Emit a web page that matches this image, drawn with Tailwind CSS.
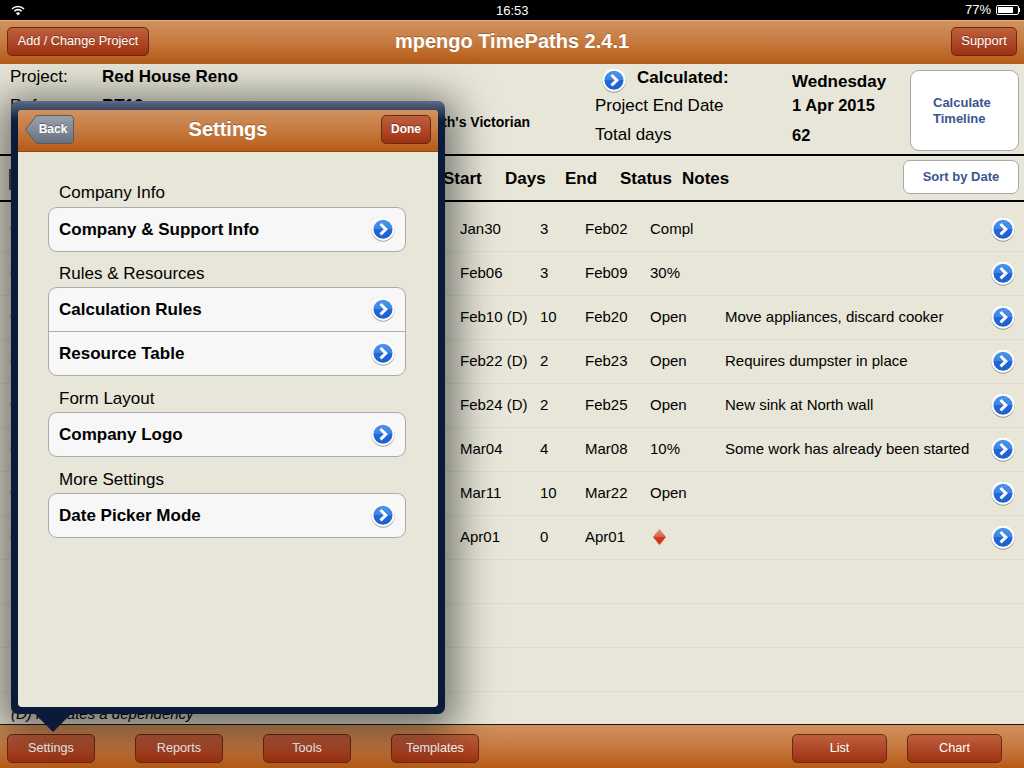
<!DOCTYPE html>
<html lang="en">
<head>
    <meta charset="UTF-8">
    <meta name="viewport" content="width=device-width, initial-scale=1.0">
    <title>mpengo TimePaths</title>
    <script src="https://cdn.jsdelivr.net/npm/@tailwindcss/browser@4"></script>
</head>
<body class="font-['Liberation_Sans',sans-serif] text-black bg-[#e7e6d8]">
<svg class="absolute w-0 h-0">
    <defs>
        <linearGradient id="blue" x1="0" y1="0" x2="0" y2="1">
            <stop offset="0" stop-color="#4f94ea"/>
            <stop offset="0.5" stop-color="#3d83e4"/>
            <stop offset="0.5" stop-color="#2468d8"/>
            <stop offset="1" stop-color="#1a5fd0"/>
        </linearGradient>
        <linearGradient id="ruby" x1="0" y1="0" x2="0" y2="1">
            <stop offset="0" stop-color="#e58a78"/>
            <stop offset="0.5" stop-color="#d9604c"/>
            <stop offset="0.5" stop-color="#d8391f"/>
            <stop offset="1" stop-color="#c93219"/>
        </linearGradient>
        <symbol id="disclosure" viewBox="0 0.8 24 24">
            <circle cx="12" cy="13" r="11.5" fill="#000" fill-opacity="0.35"/>
            <circle cx="12" cy="12" r="11.5" fill="#fff"/>
            <circle cx="12" cy="12" r="9.5" fill="url(#blue)"/>
            <path d="M9.5 6.8 L14.8 12 L9.5 17.2" fill="none" stroke="#fff" stroke-width="3"/>
        </symbol>
    </defs>
</svg>

<div class="relative w-[1024px] h-[768px] overflow-hidden flex flex-col">
    <!-- Status bar -->
    <div class="h-5 bg-black text-white text-[13px] flex items-center justify-between relative shrink-0">
        <svg class="ml-[11px]" width="14" height="11" viewBox="0 0 14 11">
            <path d="M1 4 A8.5 8.5 0 0 1 13 4" fill="none" stroke="#fff" stroke-width="1.6"/>
            <path d="M3.3 6.2 A5.2 5.2 0 0 1 10.7 6.2" fill="none" stroke="#fff" stroke-width="1.6"/>
            <path d="M7 10.5 L4.9 8.2 A3 3 0 0 1 9.1 8.2 Z" fill="#fff"/>
        </svg>
        <span class="absolute left-[496px] top-[3px] leading-4">16:53</span>
        <div class="flex items-center mr-[4px]">
            <span>77%</span>
            <div class="ml-[5px] w-[23px] h-[10px] border border-white rounded-[2px] p-[1px]"><div class="h-full w-[77%] bg-white"></div></div>
            <div class="w-[1px] h-1 bg-white"></div>
        </div>
    </div>

    <!-- Top nav bar -->
    <div class="h-11 shrink-0 bg-linear-to-b from-[#d0925f] via-[#c67a3f] to-[#b75b16] border-t border-[#e0ac80] border-b border-b-[#a8642f] flex items-center justify-between px-[7px] pb-[2px] relative">
        <button class="h-[29px] w-[142px] pt-[1px] rounded-[5px] border border-[#6b2a10] bg-linear-to-b from-[#bf5f3e] to-[#9d310e] text-white text-[12.7px] [text-shadow:0_-1px_0_#0005]">Add / Change Project</button>
        <div class="absolute inset-x-0 text-center text-white text-[20px] font-bold leading-6 [text-shadow:0_-1px_0_#0004] pointer-events-none">mpengo TimePaths 2.4.1</div>
        <button class="h-[29px] w-[66px] rounded-[5px] border border-[#6b2a10] bg-linear-to-b from-[#bf5f3e] to-[#9d310e] text-white text-[13px] [text-shadow:0_-1px_0_#0005]">Support</button>
    </div>

    <!-- Project summary -->
    <div class="h-[90px] shrink-0 relative flex border-b-[2px] border-black box-content">
        <div class="w-[589px] pl-[10px] pt-[3px] text-[17px] leading-5">
            <div class="flex h-[29px]"><span class="w-[92px]">Project:</span><span class="font-bold">Red House Reno</span></div>
            <div class="flex h-[29px]"><span class="w-[92px]">Ref:</span><span class="font-bold">RT10</span></div>
            <div class="flex h-5"><span class="w-[92px]">Site:</span><span class="font-bold text-[14px] w-[428px] text-right -mt-[13px]">Smith's Victorian</span></div>
        </div>
        <div class="w-[197px] pt-[2px] text-[17px] leading-5 pl-[6px]">
            <div class="flex h-[29px] items-start">
                <svg class="w-6 h-6 ml-[7px] mt-[3px] shrink-0"><use href="#disclosure"/></svg>
                <span class="font-bold ml-[11px] mt-[2px]">Calculated:</span>
            </div>
            <div class="h-[29px] pt-[1px]">Project End Date</div>
            <div class="pt-[1px]">Total days</div>
        </div>
        <div class="w-[124px] pt-[8px] pl-[6px] leading-5 font-bold">
            <div class="h-[23px] text-[17px]">Wednesday</div>
            <div class="h-[30px] text-[16.5px]">1 Apr 2015</div>
            <div class="text-[16.5px]">62</div>
        </div>
        <button class="mt-[6px] w-[109px] h-[81px] bg-white border border-[#a9a9a9] rounded-[9px] text-left pl-[22px] text-[13px] leading-4 font-bold text-[#3b5590]">Calculate<br>Timeline</button>
    </div>

    <!-- Column headers -->
    <div class="h-[42px] shrink-0 relative flex items-center pt-[2px] border-b-[2px] border-black box-content font-bold text-[17px]">
        <span class="w-[9px]"></span>
        <span class="w-[434px] h-[21px] border-l-2 border-[#555]"></span>
        <span class="w-[62px]">Start</span>
        <span class="w-[60px]">Days</span>
        <span class="w-[55px]">End</span>
        <span class="w-[62px]">Status</span>
        <span class="w-[221px]">Notes</span>
        <button class="w-[116px] h-[34px] mb-[4px] bg-white border border-[#a9a9a9] rounded-[7px] text-[13px] text-[#3b5590] font-bold">Sort by Date</button>
    </div>

    <!-- Rows -->
    <div class="flex-1 text-[15px] pt-[6px] relative">
        <div class="h-11 flex items-center border-b border-[#dcdccf] pl-[10px]"><span class="w-[450px]">C</span><span class="w-20">Jan30</span><span class="w-[45px]">3</span><span class="w-[65px]">Feb02</span><span class="w-[75px]">Compl</span><span class="w-[266px]"></span><svg class="w-6 h-6"><use href="#disclosure"/></svg></div>
        <div class="h-11 flex items-center border-b border-[#dcdccf] pl-[10px]"><span class="w-[450px]">C</span><span class="w-20">Feb06</span><span class="w-[45px]">3</span><span class="w-[65px]">Feb09</span><span class="w-[75px]">30%</span><span class="w-[266px]"></span><svg class="w-6 h-6"><use href="#disclosure"/></svg></div>
        <div class="h-11 flex items-center border-b border-[#dcdccf] pl-[10px]"><span class="w-[450px]">C</span><span class="w-20">Feb10 (D)</span><span class="w-[45px]">10</span><span class="w-[65px]">Feb20</span><span class="w-[75px]">Open</span><span class="w-[266px]">Move appliances, discard cooker</span><svg class="w-6 h-6"><use href="#disclosure"/></svg></div>
        <div class="h-11 flex items-center border-b border-[#dcdccf] pl-[10px]"><span class="w-[450px]">C</span><span class="w-20">Feb22 (D)</span><span class="w-[45px]">2</span><span class="w-[65px]">Feb23</span><span class="w-[75px]">Open</span><span class="w-[266px]">Requires dumpster in place</span><svg class="w-6 h-6"><use href="#disclosure"/></svg></div>
        <div class="h-11 flex items-center border-b border-[#dcdccf] pl-[10px]"><span class="w-[450px]">C</span><span class="w-20">Feb24 (D)</span><span class="w-[45px]">2</span><span class="w-[65px]">Feb25</span><span class="w-[75px]">Open</span><span class="w-[266px]">New sink at North wall</span><svg class="w-6 h-6"><use href="#disclosure"/></svg></div>
        <div class="h-11 flex items-center border-b border-[#dcdccf] pl-[10px]"><span class="w-[450px]">C</span><span class="w-20">Mar04</span><span class="w-[45px]">4</span><span class="w-[65px]">Mar08</span><span class="w-[75px]">10%</span><span class="w-[266px]">Some work has already been started</span><svg class="w-6 h-6"><use href="#disclosure"/></svg></div>
        <div class="h-11 flex items-center border-b border-[#dcdccf] pl-[10px]"><span class="w-[450px]">C</span><span class="w-20">Mar11</span><span class="w-[45px]">10</span><span class="w-[65px]">Mar22</span><span class="w-[75px]">Open</span><span class="w-[266px]"></span><svg class="w-6 h-6"><use href="#disclosure"/></svg></div>
        <div class="h-11 flex items-center border-b border-[#dcdccf] pl-[10px]"><span class="w-[450px]">C</span><span class="w-20">Apr01</span><span class="w-[45px]">0</span><span class="w-[65px]">Apr01</span><span class="w-[75px]"><svg class="ml-[3px] mb-[2px]" width="13" height="16" viewBox="0 0 13 16"><path d="M6.5 0 L13 8 L6.5 16 L0 8 Z" fill="url(#ruby)"/></svg></span><span class="w-[266px]"></span><svg class="w-6 h-6"><use href="#disclosure"/></svg></div>
        <div class="h-11 border-b border-[#dcdccf]"></div>
        <div class="h-11 border-b border-[#dcdccf]"></div>
        <div class="h-11 border-b border-[#dcdccf]"></div>
        <div class="pl-[11px] pt-[14px] italic leading-4">(D) indicates a dependency</div>
    </div>

    <!-- Bottom toolbar -->
    <div class="h-11 shrink-0 bg-linear-to-b from-[#d0925f] via-[#c67a3f] to-[#b75b16] border-t border-[#2a1408] flex items-center px-[7px] pt-[3px] text-white text-[12.7px] [text-shadow:0_-1px_0_#0005]">
        <button class="h-[29px] w-[88px] pt-[1px] rounded-[5px] border border-[#6b2a10] bg-linear-to-b from-[#bf5f3e] to-[#9d310e]">Settings</button>
        <button class="ml-10 h-[29px] w-[88px] pt-[1px] rounded-[5px] border border-[#6b2a10] bg-linear-to-b from-[#bf5f3e] to-[#9d310e]">Reports</button>
        <button class="ml-10 h-[29px] w-[88px] pt-[1px] rounded-[5px] border border-[#6b2a10] bg-linear-to-b from-[#bf5f3e] to-[#9d310e]">Tools</button>
        <button class="ml-10 h-[29px] w-[88px] pt-[1px] rounded-[5px] border border-[#6b2a10] bg-linear-to-b from-[#bf5f3e] to-[#9d310e]">Templates</button>
        <button class="ml-auto h-[29px] w-[95px] pt-[1px] rounded-[5px] border border-[#6b2a10] bg-linear-to-b from-[#bf5f3e] to-[#9d310e]">List</button>
        <button class="ml-5 mr-[15px] h-[29px] w-[95px] pt-[1px] rounded-[5px] border border-[#6b2a10] bg-linear-to-b from-[#bf5f3e] to-[#9d310e]">Chart</button>
    </div>

    <!-- Settings popover -->
    <div class="absolute left-[11px] top-[101px] w-[434px] h-[613px] rounded-[7px] bg-linear-to-b from-[#5d6b85] via-[#0d1d3c] to-[#0a1a38] bg-[length:100%_40px] bg-no-repeat bg-[#0a1a38] shadow-[0_8px_40px_12px_rgba(0,0,0,0.5)] pt-[9px] px-[7px] pb-[7px]">
        <div class="h-full rounded-[4px] bg-[#e7e6d8] overflow-hidden flex flex-col">
            <div class="h-[42px] shrink-0 bg-linear-to-b from-[#d0925f] via-[#c67a3f] to-[#b75b16] border-b border-[#8a4a1c] flex items-center justify-between relative px-[7px] pb-[3px]">
                <svg class="absolute left-[7px] top-[5px]" width="49" height="29" viewBox="0 0 49 29">
                    <defs><linearGradient id="gray" x1="0" y1="0" x2="0" y2="1"><stop offset="0" stop-color="#9aa3ab"/><stop offset="1" stop-color="#667080"/></linearGradient></defs>
                    <path d="M0.5 14.5 L11 1 Q11.8 0.5 13 0.5 H45 Q48.5 0.5 48.5 4 V25 Q48.5 28.5 45 28.5 H13 Q11.8 28.5 11 28 Z" fill="url(#gray)" stroke="#5b5b58"/>
                </svg>
                <span class="relative ml-[10px] w-9 text-center text-white text-[12px] font-bold [text-shadow:0_-1px_0_#0005]">Back</span>
                <span class="absolute inset-x-0 text-center text-white text-[20px] font-bold [text-shadow:0_-1px_0_#0004] pointer-events-none">Settings</span>
                <button class="relative h-[29px] w-[50px] rounded-[5px] border border-[#6b2a10] bg-linear-to-b from-[#bf5f3e] to-[#9d310e] text-white text-[12px] font-bold [text-shadow:0_-1px_0_#0005]">Done</button>
            </div>
            <div class="pl-[30px] pr-[32px] pt-[31px] text-[17px]">
                <div class="pl-[11px] h-6 leading-5">Company Info</div>
                <div class="rounded-[9px] border border-[#ababab] bg-[#f7f7f7] font-bold divide-y divide-[#ababab] mb-[12px]">
                    <div class="h-[43px] flex items-center justify-between px-[10px]">Company &amp; Support Info<svg class="w-6 h-6"><use href="#disclosure"/></svg></div>
                </div>
                <div class="pl-[11px] h-[23px] leading-5">Rules &amp; Resources</div>
                <div class="rounded-[9px] border border-[#ababab] bg-[#f7f7f7] font-bold divide-y divide-[#ababab] mb-[13px]">
                    <div class="h-11 flex items-center justify-between px-[10px]">Calculation Rules<svg class="w-6 h-6"><use href="#disclosure"/></svg></div>
                    <div class="h-[43px] flex items-center justify-between px-[10px]">Resource Table<svg class="w-6 h-6"><use href="#disclosure"/></svg></div>
                </div>
                <div class="pl-[11px] h-[23px] leading-5">Form Layout</div>
                <div class="rounded-[9px] border border-[#ababab] bg-[#f7f7f7] font-bold divide-y divide-[#ababab] mb-[13px]">
                    <div class="h-[43px] flex items-center justify-between px-[10px]">Company Logo<svg class="w-6 h-6"><use href="#disclosure"/></svg></div>
                </div>
                <div class="pl-[11px] h-[23px] leading-5">More Settings</div>
                <div class="rounded-[9px] border border-[#ababab] bg-[#f7f7f7] font-bold">
                    <div class="h-[43px] flex items-center justify-between px-[10px]">Date Picker Mode<svg class="w-6 h-6"><use href="#disclosure"/></svg></div>
                </div>
            </div>
        </div>
    </div>
    <!-- Popover arrow -->
    <svg class="absolute left-[35px] top-[714px]" width="36" height="18" viewBox="0 0 36 18"><path d="M0 0 H36 L18 18 Z" fill="#0a1a38"/></svg>
</div>
</body>
</html>
